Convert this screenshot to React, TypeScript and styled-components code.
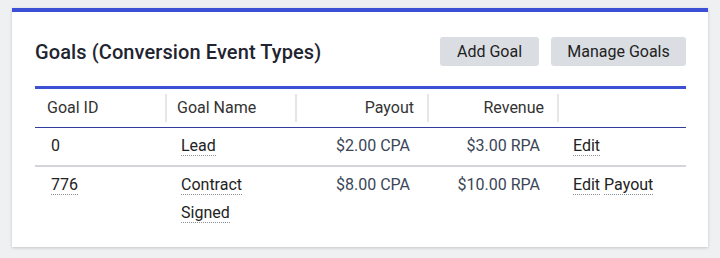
import React from 'react';
import styled, { createGlobalStyle } from 'styled-components';

const GlobalStyle = createGlobalStyle`
  body {
    margin: 0;
    background: #eef0f2;
    font-family: Roboto, 'Liberation Sans', sans-serif;
  }
`;

const Page = styled.div`
  padding: 8px 12px 10px 12px;
`;

const Card = styled.div`
  background: #fff;
  border-top: 4px solid #3b50d5;
  box-shadow: 0 1px 3px rgba(0, 0, 0, 0.18);
  padding: 25px 22px 15px 23px;
`;

const Header = styled.div`
  display: flex;
  align-items: center;
  justify-content: space-between;
  margin-bottom: 20px;
`;

const Title = styled.h2`
  margin: 0;
  font-size: 20px;
  font-weight: 500;
  letter-spacing: 0.1px;
  color: #1f2530;
`;

const Actions = styled.div`
  display: flex;
  gap: 12px;
`;

const Button = styled.button<{ $w: number }>`
  width: ${(p) => p.$w}px;
  height: 29px;
  border: none;
  border-radius: 3px;
  background: #dadee2;
  color: #222;
  font-family: inherit;
  font-size: 16px;
  padding: 0;
`;

const Table = styled.table`
  width: 100%;
  border-collapse: collapse;
  table-layout: fixed;
  border-top: 3px solid #3b50d5;
`;

const Th = styled.th<{ $right?: boolean }>`
  padding: 5px 0;
  font-weight: 400;
  font-size: 16px;
  color: #333;
  border-bottom: 1px solid #2f3e9e;
  text-align: ${(p) => (p.$right ? 'right' : 'left')};
`;

const ThInner = styled.div<{ $first?: boolean }>`
  height: 28px;
  line-height: 28px;
  padding: 0 13px 0 10px;
  border-left: 2px solid ${(p) => (p.$first ? 'transparent' : '#e4e6e8')};
`;

const Tr = styled.tr`
  & + & td {
    border-top: 2px solid #d3d5d8;
  }
`;

const Td = styled.td<{ $right?: boolean; $muted?: boolean }>`
  padding: 4px 17px 5px 16px;
  font-size: 16px;
  line-height: 28px;
  vertical-align: top;
  color: ${(p) => (p.$muted ? '#3b4658' : '#222')};
  text-align: ${(p) => (p.$right ? 'right' : 'left')};
`;

const Dotted = styled.span`
  border-bottom: 1px dotted #8a8f98;
`;

const Tight = styled.span`
  margin-right: 4px;
`;

const columns = [
  { label: 'Goal ID', width: 130 },
  { label: 'Goal Name', width: 130 },
  { label: 'Payout', width: 132, right: true },
  { label: 'Revenue', width: 130, right: true },
  { label: '', width: 129 },
];

const goals = [
  { id: '0', idLink: false, name: ['Lead'], payout: '$2.00 CPA', revenue: '$3.00 RPA', actions: ['Edit'] },
  {
    id: '776',
    idLink: true,
    name: ['Contract', 'Signed'],
    payout: '$8.00 CPA',
    revenue: '$10.00 RPA',
    actions: ['Edit', 'Payout'],
  },
];

export default function App() {
  return (
    <Page>
      <GlobalStyle />
      <Card>
        <Header>
          <Title>Goals (Conversion Event Types)</Title>
          <Actions>
            <Button $w={99}>Add Goal</Button>
            <Button $w={135}>Manage Goals</Button>
          </Actions>
        </Header>
        <Table>
          <colgroup>
            {columns.map((c, i) => (
              <col key={i} style={{ width: c.width }} />
            ))}
          </colgroup>
          <thead>
            <tr>
              {columns.map((c, i) => (
                <Th key={i} $right={c.right}>
                  <ThInner $first={i === 0}>{c.label}</ThInner>
                </Th>
              ))}
            </tr>
          </thead>
          <tbody>
            {goals.map((g) => (
              <Tr key={g.id}>
                <Td>{g.idLink ? <Dotted>{g.id}</Dotted> : g.id}</Td>
                <Td>
                  {g.name.map((n, i) => (
                    <React.Fragment key={n}>
                      {i > 0 && <br />}
                      <Dotted>{n}</Dotted>
                    </React.Fragment>
                  ))}
                </Td>
                <Td $right $muted>
                  {g.payout}
                </Td>
                <Td $right $muted>
                  {g.revenue}
                </Td>
                <Td>
                  {g.actions.map((a, i) =>
                    i < g.actions.length - 1 ? (
                      <Tight key={a}>
                        <Dotted>{a}</Dotted>
                      </Tight>
                    ) : (
                      <Dotted key={a}>{a}</Dotted>
                    ),
                  )}
                </Td>
              </Tr>
            ))}
          </tbody>
        </Table>
      </Card>
    </Page>
  );
}
